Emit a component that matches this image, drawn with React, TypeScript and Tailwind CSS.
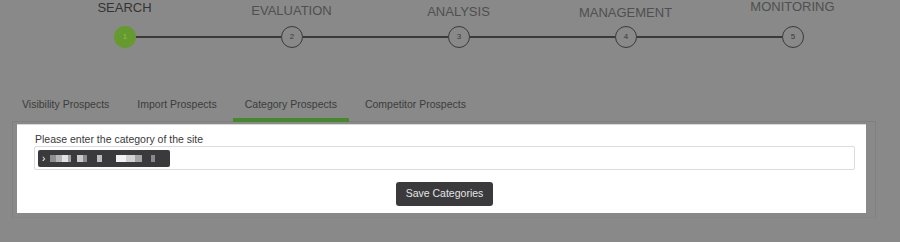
import React from "react";

const steps = [
  { label: "SEARCH", pad: "pt-[1px]", color: "text-[#343434]" },
  { label: "EVALUATION", pad: "pt-[4px]", color: "text-[#4f4f4f]" },
  { label: "ANALYSIS", pad: "pt-[5px]", color: "text-[#4f4f4f]" },
  { label: "MANAGEMENT", pad: "pt-[6px]", color: "text-[#4f4f4f]" },
  { label: "MONITORING", pad: "pt-0", color: "text-[#4f4f4f]" },
];

const tabs = ["Visibility Prospects", "Import Prospects", "Category Prospects", "Competitor Prospects"];

// redacted text blocks in the chip: [width, colour]
const blocks: [number, string][] = [
  [6, "#8e8e8e"],
  [6, "#b4b4b4"],
  [6, "#e2e2e2"],
  [3, "#a2a2a2"],
  [6, "#3a3a3c"],
  [6, "#cacaca"],
  [4, "#8c8c8c"],
  [10, "#3a3a3c"],
  [5, "#bcbcbc"],
  [14, "#3a3a3c"],
  [10, "#f2f2f2"],
  [9, "#d2d2d2"],
  [7, "#a4a4a4"],
  [9, "#3a3a3c"],
  [4, "#8a8a8a"],
];

function Circle({ n, active }: { n: number; active?: boolean }) {
  return (
    <div
      className={
        active
          ? "w-[22px] h-[22px] shrink-0 rounded-full bg-[#649a2e] flex items-center justify-center text-[8px] text-[#8fb85d]"
          : "w-[22px] h-[22px] shrink-0 rounded-full border-[1.5px] border-[#3a3a3a] flex items-center justify-center text-[8px] text-[#3a3a3a]"
      }
    >
      {n}
    </div>
  );
}

export default function App() {
  return (
    <div
      className="w-[900px] h-[242px] bg-[#898989] overflow-hidden"
      style={{ fontFamily: '"Liberation Sans", Arial, sans-serif' }}
    >
      {/* stepper */}
      <div className="h-[26px] flex pl-[41px]">
        {steps.map((s) => (
          <div key={s.label} className={`w-[167px] shrink-0 text-center text-[13px] leading-[13px] ${s.pad} ${s.color}`}>
            {s.label}
          </div>
        ))}
      </div>
      <div className="flex items-center pl-[114px] w-[804px]">
        <Circle n={1} active />
        <div className="flex-1 h-[1.5px] bg-[#3a3a3a]" />
        <Circle n={2} />
        <div className="flex-1 h-[1.5px] bg-[#3a3a3a]" />
        <Circle n={3} />
        <div className="flex-1 h-[1.5px] bg-[#3a3a3a]" />
        <Circle n={4} />
        <div className="flex-1 h-[1.5px] bg-[#3a3a3a]" />
        <Circle n={5} />
      </div>

      {/* tabs */}
      <div className="mt-[40px] flex gap-[4px] pl-[10px]">
        {tabs.map((t) => (
          <div
            key={t}
            className={
              "px-3 pt-[9px] pb-[7px] text-[10.5px] leading-[14px] text-[#3c3c3c] border-b-4 " +
              (t === "Category Prospects" ? "border-[#46892a]" : "border-transparent")
            }
          >
            {t}
          </div>
        ))}
      </div>

      {/* panel */}
      <div className="-mt-[1px] ml-[12px] w-[864px] border border-[#808080] border-b-[#858585] pt-[2px] pl-[4px] pr-[9px] pb-[4px]">
        <div className="bg-white border-t border-[#d8d8d8] pt-[7px] pl-[17px] pr-[11px] pb-[7px]">
          <div className="pl-[1px] text-[10.5px] leading-[14px] text-[#3a3a3a]">Please enter the category of the site</div>
          <div className="h-[24px] border border-[#dcdcdc] rounded-[2px] pl-[3px] pt-[3px]">
            <div className="w-[132px] h-[17px] bg-[#3a3a3c] rounded-[2px] flex items-center pl-[4px]">
              <span className="text-[10px] leading-none text-white mr-[5px]">›</span>
              {blocks.map(([w, c], i) => (
                <span key={i} className="h-[7px] shrink-0" style={{ width: w, backgroundColor: c }} />
              ))}
            </div>
          </div>
          <div className="mt-[12px] flex justify-center">
            <button className="h-[24px] px-[10px] rounded-[3px] bg-[#3a3a3c] text-[10.5px] text-[#e4e4e4]">
              Save Categories
            </button>
          </div>
        </div>
      </div>
    </div>
  );
}
